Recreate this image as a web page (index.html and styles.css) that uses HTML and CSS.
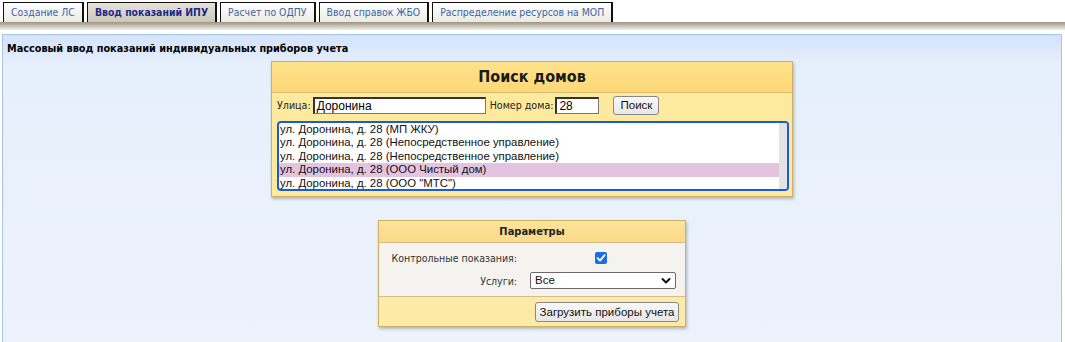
FILE: index.html
```html
<!DOCTYPE html>
<html lang="ru">
<head>
<meta charset="utf-8">
<link rel="stylesheet" href="styles.css">
</head>
<body>
<div class="tabs">
  <div class="tab">Создание ЛС</div>
  <div class="tab active">Ввод показаний ИПУ</div>
  <div class="tab">Расчет по ОДПУ</div>
  <div class="tab">Ввод справок ЖБО</div>
  <div class="tab">Распределение ресурсов на МОП</div>
</div>
<div class="tabbar"></div>
<div class="panel">
  <div class="panel-title">Массовый ввод показаний индивидуальных приборов учета</div>
  <div class="content">
    <div class="search">
      <div class="search-head">Поиск домов</div>
      <div class="search-row">
        <span class="lbl">Улица:</span>
        <span class="input street">Доронина</span>
        <span class="lbl">Номер дома:</span>
        <span class="input house">28</span>
        <span class="btn find">Поиск</span>
      </div>
      <div class="list">
        <div class="items">
          <div class="item">ул. Доронина, д. 28 (МП ЖКУ)</div>
          <div class="item">ул. Доронина, д. 28 (Непосредственное управление)</div>
          <div class="item">ул. Доронина, д. 28 (Непосредственное управление)</div>
          <div class="item sel">ул. Доронина, д. 28 (ООО Чистый дом)</div>
          <div class="item">ул. Доронина, д. 28 (ООО "МТС")</div>
        </div>
        <div class="scroll"></div>
      </div>
    </div>
    <div class="params">
      <div class="params-head">Параметры</div>
      <div class="params-body">
        <div class="prow">
          <span class="plbl">Контрольные показания:</span>
          <span class="pval"><span class="check"><svg width="12" height="12" viewBox="0 0 12 12"><path d="M2.6 6.2 L5 8.6 L9.6 3.2" fill="none" stroke="#fff" stroke-width="1.8" stroke-linecap="round" stroke-linejoin="round"/></svg></span></span>
        </div>
        <div class="prow">
          <span class="plbl">Услуги:</span>
          <span class="pval"><span class="select">Все<svg class="chev" width="10" height="8" viewBox="0 0 10 8"><path d="M1.5 2 L5 5.5 L8.5 2" fill="none" stroke="#111" stroke-width="2" stroke-linecap="round" stroke-linejoin="round"/></svg></span></span>
        </div>
      </div>
      <div class="params-foot">
        <span class="btn load">Загрузить приборы учета</span>
      </div>
    </div>
  </div>
</div>
</body>
</html>
```
FILE: styles.css
```css
html, body {
  margin: 0;
  padding: 0;
  background: #ffffff;
  height: 342px;
  overflow: hidden;
}
body {
  font-family: "DejaVu Sans Condensed", "DejaVu Sans", Verdana, sans-serif;
  font-stretch: condensed;
  font-size: 11px;
}
.tabs {
  display: flex;
  gap: 3px;
  padding: 2px 0 0 3px;
  height: 20px;
}
.tab {
  height: 19px;
  line-height: 19px;
  padding: 0 7px 0 7px;
  border: 1px solid #111;
  border-bottom: none;
  border-right: 2px solid #111;
  background: linear-gradient(#ffffff, #ebe9e3);
  color: #3c62a6;
  font-size: 10.4px;
}
.tab.active {
  background: linear-gradient(#e6e2d8, #cdc7b8);
  color: #1c2a8c;
  font-weight: bold;
}
.tabbar {
  height: 8px;
  background: linear-gradient(#9a9482, #c8c3b6 50%, #efede7);
}
.panel {
  margin: 4px 3px 0 2px;
  border-top: 1px solid #a6c4ee;
  border-left: 1px solid #a6c4ee;
  border-right: 1px solid #a6c4ee;
  background: linear-gradient(#d3e3fb, #e6effc 30px, #edf3fb);
  height: 320px;
}
.panel-title {
  font-weight: bold;
  font-size: 10.8px;
  padding: 7px 0 0 4px;
  height: 14px;
  color: #000;
}
.content {
  display: flex;
  flex-direction: column;
  align-items: center;
}
.search {
  margin-top: 5px;
  width: 520px;
  border: 1px solid #cfae66;
  background: #fdea9f;
  box-shadow: 1px 2px 3px rgba(0,0,0,0.25);
  padding-bottom: 5px;
}
.search-head {
  height: 30px;
  line-height: 30px;
  text-align: center;
  font-weight: bold;
  font-size: 16px;
  color: #1a1a1a;
  background: linear-gradient(#fde28b, #fdd878);
  border-bottom: 1px solid #d8b870;
}
.search-row {
  display: flex;
  align-items: center;
  padding: 1px 5px 0 5px;
  height: 22px;
  color: #222;
}
.lbl { font-size: 10.6px; margin-right: 2px; }
.input {
  background: #fff;
  border: 1px solid #767676;
  border-top: 2px solid #333;
  border-left: 2px solid #333;
  height: 14px;
  line-height: 14px;
  padding: 0 2px;
  font-family: "Liberation Sans", Arial, sans-serif;
  font-stretch: normal;
  font-size: 12px;
  color: #000;
}
.street { width: 166px; margin-right: 4px; }
.house { width: 37px; margin-right: 14px; }
.btn {
  display: inline-block;
  background: linear-gradient(#f8f8f8, #e7e7e7);
  border: 1px solid #888;
  border-radius: 3px;
  font-family: "Liberation Sans", Arial, sans-serif;
  font-stretch: normal;
  font-size: 11.5px;
  color: #111;
  text-align: center;
}
.find { width: 44px; height: 17px; line-height: 17px; }
.list {
  margin: 5px 3px 0 5px;
  height: 66px;
  border: 2px solid #1a5bd8;
  border-radius: 4px;
  background: #fff;
  display: flex;
  overflow: hidden;
}
.items { flex: 1; padding-top: 0; }
.item {
  height: 13.4px;
  line-height: 13px;
  font-family: "Liberation Sans", Arial, sans-serif;
  font-stretch: normal;
  font-size: 11.4px;
  color: #111;
  padding-left: 1px;
}
.item.sel { background: #e4c3e0; }
.scroll { width: 8px; background: #e3e3e3; }
.params {
  margin-top: 23px;
  width: 306px;
  border: 1px solid #cfae66;
  box-shadow: 1px 2px 3px rgba(0,0,0,0.25);
  background: #fdeaa6;
}
.params-head {
  height: 21px;
  line-height: 21px;
  text-align: center;
  font-weight: bold;
  font-size: 11px;
  color: #222;
  background: linear-gradient(#fde39a, #fdd98a);
  border-bottom: 1px solid #d5bd8a;
}
.params-body {
  background: #f5f3ef;
  border-bottom: 1px solid #d5bd8a;
  padding: 3px 0 4px 0;
}
.prow {
  display: flex;
  align-items: center;
  height: 23px;
}
.plbl {
  width: 138px;
  text-align: right;
  white-space: nowrap;
  font-size: 10.5px;
  color: #333;
}
.pval { padding-left: 13px; display: flex; align-items: center; }
.check {
  margin-left: 65px;
  width: 12px;
  height: 12px;
  border-radius: 2px;
  background: #1a6ee6;
  display: inline-flex;
}
.select {
  position: relative;
  display: inline-block;
  width: 140px;
  height: 15px;
  line-height: 15px;
  padding: 0 0 0 4px;
  background: #fff;
  border: 1px solid #6a6a6a;
  border-radius: 2px;
  font-family: "Liberation Sans", Arial, sans-serif;
  font-stretch: normal;
  font-size: 11.5px;
  color: #111;
}
.chev { position: absolute; right: 4px; top: 4px; }
.params-foot {
  height: 29px;
  display: flex;
  align-items: center;
  justify-content: flex-end;
  padding-right: 6px;
}
.load { width: 142px; height: 18px; line-height: 18px; }
```
